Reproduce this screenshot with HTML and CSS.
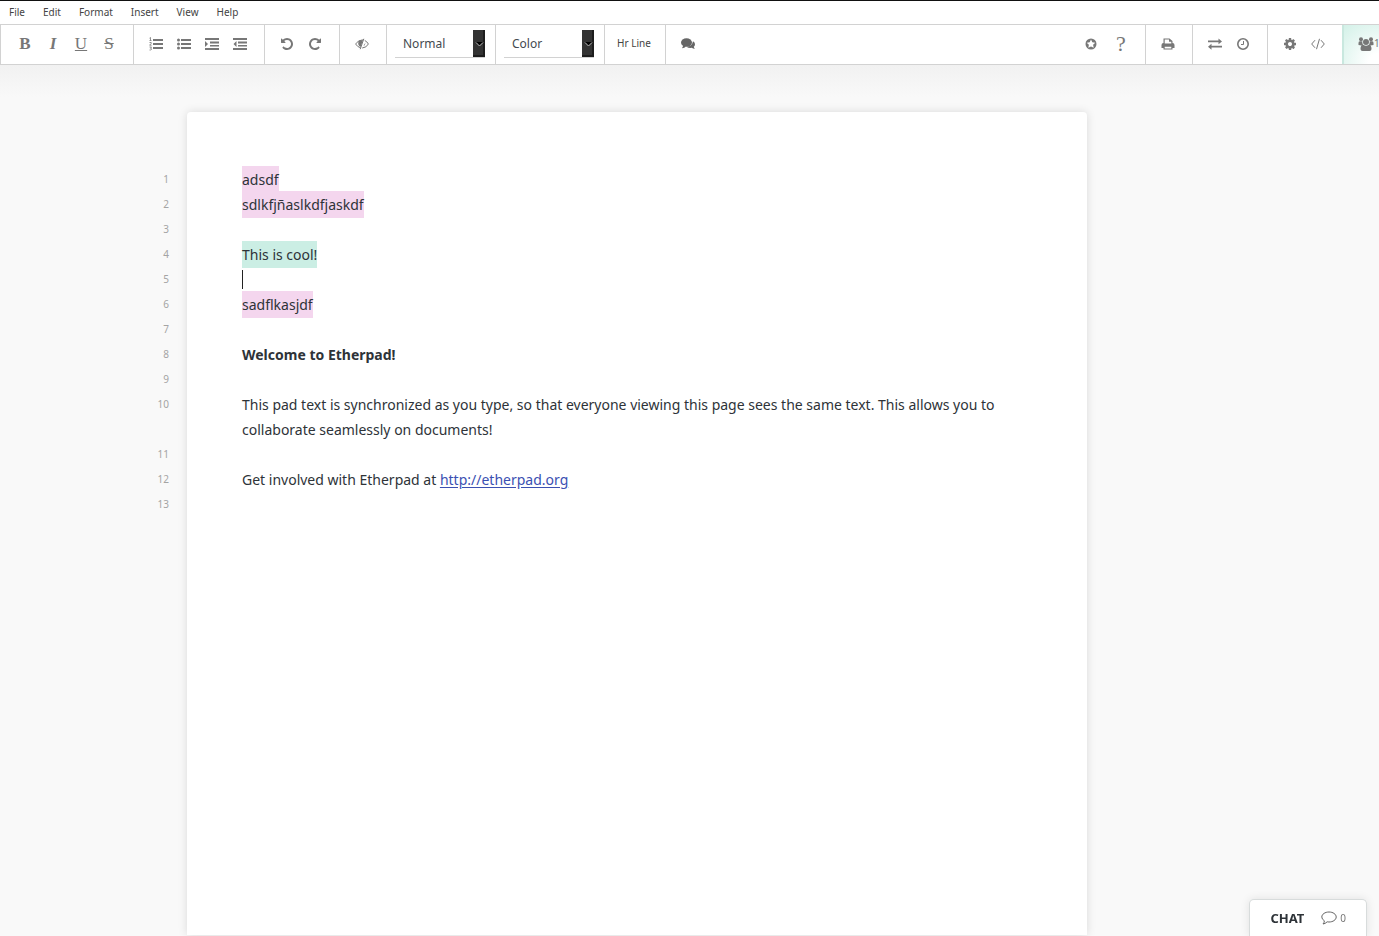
FILE: index.html
```html
<!DOCTYPE html>
<html lang="en">
<head>
<meta charset="utf-8">
<title>Etherpad</title>
<link rel="stylesheet" href="styles.css">
</head>
<body>
<nav class="menubar">
  <button>File</button><button>Edit</button><button>Format</button><button>Insert</button><button>View</button><button>Help</button>
</nav>
<div class="toolbar">
  <div class="group group-first">
    <button class="tool glyph" aria-label="Bold">B</button>
    <button class="tool glyph italic" aria-label="Italic">I</button>
    <button class="tool glyph underline" aria-label="Underline">U</button>
    <button class="tool glyph strike" aria-label="Strikethrough">S</button>
  </div>
  <div class="group">
    <button class="tool" aria-label="Ordered list"><svg width="14" height="14" viewBox="0 0 14 14"><path d="M4 2h10v2H4zM4 6h10v2H4zM4 10h10v2H4z"/><path d="M.5 1.200 1.500.5v3M.5 3.500h2M.5 5.500h1.700v1L.6 8.200h2M.5 10h2L1.500 11.300q1.200 0 1 1-.2 1-2 .7" class="thin"/></svg></button>
    <button class="tool" aria-label="Unordered list"><svg width="14" height="14" viewBox="0 0 14 14"><path d="M4 2h10v2H4zM4 6h10v2H4zM4 10h10v2H4z"/><circle cx="1.500" cy="3" r="1.500"/><circle cx="1.500" cy="7" r="1.500"/><circle cx="1.500" cy="11" r="1.500"/></svg></button>
    <button class="tool" aria-label="Indent"><svg width="14" height="14" viewBox="0 0 14 14"><path d="M0 1h14v2H0zM5 4.500h9v2H5zM5 8h9v1.500H5zM0 11h14v2H0zM0 4l3 3-3 3z"/></svg></button>
    <button class="tool" aria-label="Outdent"><svg width="14" height="14" viewBox="0 0 14 14"><path d="M0 1h14v2H0zM5 4.500h9v2H5zM5 8h9v1.500H5zM0 11h14v2H0zM3.500 4l-3 3 3 3z"/></svg></button>
  </div>
  <div class="group">
    <button class="tool" aria-label="Undo"><svg width="12" height="12" viewBox="0 128 1536 1536"><path id="undo" d="M1536 896q0 156-61 298t-164 245-245 164-298 61q-172 0-327-72.500t-264-204.500q-7-10-6.500-22.500t8.500-20.500l137-138q10-9 25-9 16 2 23 12 73 95 179 147t225 52q104 0 198.500-40.500t163.500-109.500 109.500-163.500 40.500-198.500-40.500-198.500-109.500-163.500-163.500-109.500-198.500-40.500q-98 0-188 35.500t-160 101.500l137 138q31 30 14 69-17 40-59 40h-448q-26 0-45-19t-19-45v-448q0-42 40-59 39-17 69 14l130 129q107-101 244.500-156.500t284.500-55.500q156 0 298 61t245 164 164 245 61 298z"/></svg></button>
    <button class="tool" aria-label="Redo"><svg width="12" height="12" viewBox="0 128 1536 1536"><use href="#undo" transform="matrix(-1 0 0 1 1536 0)"/></svg></button>
  </div>
  <div class="group">
    <button class="tool" aria-label="Clear authorship colors"><svg width="14" height="12" viewBox="0 0 14 12"><path d="M8.800.8 5.200 11.200M5.500 9.800Q2.500 9 .6 6 3.300 2 7 2h1M9.800 2.500Q12 3.500 13.400 6 11.300 9.800 7.200 10" class="line"/><path d="M3.500 3Q2.700 6 4 7.800L5.600 9 8 2.300Q5 1.800 3.500 3zM10.500 4.500Q10.500 7 8.300 8.200z"/></svg></button>
  </div>
  <div class="group">
    <div class="picker">
      <select aria-label="Heading style"><option>Normal</option></select>
      <svg class="arrow" width="12" height="27" viewBox="0 0 12 27"><path d="M0 0h12v27H0z" fill="#1d1d1d"/><path d="M0 0h10v25H0z" fill="#333"/><path d="M3 12h7l-3.500 4z" fill="#000"/><path d="m3 12.500 3.500 3.500L10 12.500" fill="none" stroke="#bbb"/></svg>
    </div>
  </div>
  <div class="group">
    <div class="picker">
      <select aria-label="Text color"><option>Color</option></select>
      <svg class="arrow" width="12" height="27" viewBox="0 0 12 27"><path d="M0 0h12v27H0z" fill="#1d1d1d"/><path d="M0 0h10v25H0z" fill="#333"/><path d="M3 12h7l-3.500 4z" fill="#000"/><path d="m3 12.500 3.500 3.500L10 12.500" fill="none" stroke="#bbb"/></svg>
    </div>
  </div>
  <div class="group">
    <button class="tool wide">Hr Line</button>
  </div>
  <div class="group group-last">
    <button class="tool dark" aria-label="Comments"><svg width="14" height="12" viewBox="0 0 14 12"><ellipse cx="5.500" cy="4.500" rx="5.500" ry="4.300"/><path d="M2.300 7.500 1 10.200Q3.500 10 5 8.500zM12 3.300q2 1.200 2 3 0 1.500-1.200 2.500.2 1.200 1 1.900-1.600.2-3-.9-3 .6-5.300-1.100 5.600-.3 6.500-5.400z"/></svg></button>
  </div>
  <div class="group right spaced">
    <button class="tool" aria-label="Embed star"><svg width="12" height="12" viewBox="0 0 12 12"><path fill-rule="evenodd" d="M6 .5a5.500 5.500 0 1 0 0 11 5.500 5.500 0 0 0 0-11zM6 1.500 7.300 4.300 10.300 4.700 8.100 6.800 8.700 9.800 6 8.400 3.300 9.800 3.900 6.800 1.700 4.700 4.700 4.300z"/></svg></button>
    <button class="tool question" aria-label="Help">?</button>
  </div>
  <div class="group">
    <button class="tool" aria-label="Print"><svg width="14" height="12" viewBox="0 0 14 12"><path fill-rule="evenodd" d="M2.500 5V.5h6L11.500 3v2q2 0 2 2v3h-2v1.500h-9V10h-2V7q0-2 2-2zM3.700 1.600v4h6.600V3.700H8V1.600zM3.700 8.700v1.700h6.600V8.700z"/></svg></button>
  </div>
  <div class="group">
    <button class="tool" aria-label="Import/Export"><svg width="14" height="12" viewBox="0 0 14 12"><path d="M0 2.500h10.500V.5L14 3.500 10.500 6.300v-2H0zM14 7.700H3.500V5.800L0 8.700l3.500 3V9.500H14z"/></svg></button>
    <button class="tool" aria-label="Timeslider"><svg width="12" height="12" viewBox="0 0 12 12"><circle cx="6" cy="6" r="5.200" class="heavy"/><path d="M6.500 3v3.500H4" class="line"/></svg></button>
  </div>
  <div class="group">
    <button class="tool" aria-label="Settings"><svg width="12" height="12" viewBox="128 128 1536 1536"><path d="M1152 896q0-106-75-181t-181-75-181 75-75 181 75 181 181 75 181-75 75-181zm512-109v222q0 12-8 23t-20 13l-185 28q-19 54-39 91 35 50 107 138 10 12 10 25t-9 23q-27 37-99 108t-94 71q-12 0-26-9l-138-108q-44 23-91 38-16 136-29 186-7 28-36 28h-222q-14 0-24.500-8.500t-11.500-21.500l-28-184q-49-16-90-37l-141 107q-10 9-25 9-14 0-25-11-126-114-165-168-7-10-7-23 0-12 8-23 15-21 51-66.500t54-70.500q-27-50-41-99l-183-27q-13-2-21-12.500t-8-23.500v-222q0-12 8-23t19-13l186-28q14-46 39-92-40-57-107-138-10-12-10-24 0-10 9-23 26-36 98.500-107.500t94.500-71.500q13 0 26 10l138 107q44-23 91-38 16-136 29-186 7-28 36-28h222q14 0 24.500 8.500t11.500 21.500l28 184q49 16 90 37l142-107q9-9 24-9 13 0 25 10 129 119 165 170 7 8 7 22 0 12-8 23-15 21-51 66.500t-54 70.500q26 50 41 98l183 28q13 2 21 12.500t8 23.500z"/></svg></button>
    <button class="tool" aria-label="Share"><svg width="14" height="12" viewBox="0 0 14 12"><path d="M4 2.200.7 6 4 9.800M10 2.200 13.300 6 10 9.800M8.500.8l-3 10.400" class="line"/></svg></button>
  </div>
  <button class="users" aria-label="Users"><svg width="16" height="14" viewBox="0 0 16 14"><circle cx="3" cy="2.200" r="2"/><circle cx="13" cy="2.200" r="2"/><circle cx="8" cy="5" r="3"/><path d="M.5 8V6q0-1.700 1.300-1.700h2.500Q4 6 5 7.700L3.600 8.500zM15.500 8V6q0-1.700-1.300-1.700h-2.500Q12 6 11 7.700l1.400.8zM2.500 12q0-4 2.700-4.300Q8 9.700 10.800 7.700q2.700.3 2.700 4.300 0 2-2 2h-7q-2 0-2-2z"/></svg>1</button>
</div>
<main class="workspace">
  <article class="page">
    <div class="row"><span class="num">1</span><div class="text"><span class="pink">adsdf</span></div></div>
    <div class="row"><span class="num">2</span><div class="text"><span class="pink">sdlkfjñaslkdfjaskdf</span></div></div>
    <div class="row"><span class="num">3</span></div>
    <div class="row"><span class="num">4</span><div class="text"><span class="mint">This is cool!</span></div></div>
    <div class="row"><span class="num">5</span><span class="caret"></span></div>
    <div class="row"><span class="num">6</span><div class="text"><span class="pink">sadflkasjdf</span></div></div>
    <div class="row"><span class="num">7</span></div>
    <div class="row"><span class="num">8</span><div class="text"><b>Welcome to Etherpad!</b></div></div>
    <div class="row"><span class="num">9</span></div>
    <div class="row"><span class="num">10</span><div class="text">This pad text is synchronized as you type, so that everyone viewing this page sees the same text. This allows you to collaborate seamlessly on documents!</div></div>
    <div class="row"><span class="num">11</span></div>
    <div class="row"><span class="num">12</span><div class="text">Get involved with Etherpad at <a href="http://etherpad.org">http://etherpad.org</a></div></div>
    <div class="row"><span class="num">13</span></div>
  </article>
</main>
<button class="chat"><b>CHAT</b><svg width="16" height="14" viewBox="0 0 16 14"><path d="M8 1c4 0 7.200 2.200 7.200 5S12 11 8 11q-1 0-1.800-.2Q4.200 12.800 2 13q1.200-1.200 1.400-3.200Q.8 8.300.8 6C.8 3.200 4 1 8 1z" class="line"/></svg><span>0</span></button>
</body>
</html>
```
FILE: styles.css
```css
* { box-sizing: border-box; }
body {
  margin: 0;
  min-height: 100vh;
  display: flex;
  flex-direction: column;
  background: #f9f9f9;
  color: #2e3338;
  font-family: "Noto Sans", sans-serif;
  font-size: 14px;
  line-height: 25px;
}
button, select {
  margin: 0;
  padding: 0;
  border: 0;
  background: none;
  color: inherit;
  font: inherit;
}
svg { fill: currentColor; flex: none; }
.line, .thin, .heavy { fill: none; stroke: currentColor; }
.thin { stroke-width: 0.8; }
.heavy { stroke-width: 1.6; }

.menubar {
  display: flex;
  gap: 18px;
  height: 24px;
  padding-left: 9px;
  border-top: 1px solid #111;
  background: #fff;
  color: #444;
  font-size: 10px;
  line-height: 23px;
}
.toolbar {
  display: flex;
  height: 41px;
  border: 1px solid #d2d2d2;
  border-right: 0;
  background: #fff;
  color: #777;
  overflow: hidden;
}
.group {
  display: flex;
  align-items: center;
  padding: 0 10px 2px 8px;
  border-right: 1px solid #d2d2d2;
}
.group-first { padding-left: 10px; }
.group-last { border-right: 0; }
.right { margin-left: auto; }
.spaced { gap: 2px; }
.tool {
  display: flex;
  align-items: center;
  justify-content: center;
  width: 28px;
  height: 28px;
}
.dark { color: #666; }
.glyph { font: bold 17px "Liberation Serif", serif; }
.italic { font-style: italic; }
.underline { font-weight: normal; text-decoration: underline; }
.strike { font-weight: normal; text-decoration: line-through; }
.question { font: 22px "Liberation Serif", serif; }
.wide { width: 42px; color: #444; font-size: 10px; white-space: nowrap; }
.picker { position: relative; width: 90px; }
.picker select {
  display: block;
  width: 100%;
  height: 28px;
  padding-left: 8px;
  border-bottom: 1px solid #d2d2d2;
  border-radius: 0;
  appearance: none;
  color: #444a50;
  font-size: 12px;
}
.arrow { position: absolute; top: 0; right: 0; pointer-events: none; }
.users {
  display: flex;
  align-items: center;
  width: 37px;
  flex: none;
  padding: 0 0 2px 14px;
  margin-left: -1px;
  border-left: 2px solid #c9e8df;
  background: radial-gradient(circle at 100% 100%, #fff 20%, #d3f1e8 100%);
  font-size: 10px;
}

.workspace {
  flex: 1;
  display: flex;
  justify-content: center;
  padding: 47px 105px 1px 0;
  background: linear-gradient(#f1f1f1, #f9f9f9 32px);
}
.page {
  width: 100%;
  max-width: 900px;
  padding: 55px;
  border-radius: 4px 4px 0 0;
  background: #fff;
  box-shadow: 0 0 10px rgba(0, 0, 0, 0.13);
}
.row { display: flex; align-items: flex-start; min-height: 25px; }
.num {
  flex: none;
  width: 40px;
  margin: 0 73px 0 -113px;
  color: #a4a4a4;
  font-size: 10px;
  line-height: 24px;
  text-align: right;
}
.pink, .mint { padding: 4px 0; }
.pink { background: #f4d6ee; }
.mint { background: #cbeee4; }
.caret { align-self: center; width: 1px; height: 19px; background: #222; }
.text a { color: #3b50b2; text-underline-offset: 2px; }

.chat {
  position: fixed;
  right: 12px;
  bottom: 0;
  display: flex;
  align-items: center;
  height: 37px;
  padding: 0 20px;
  border: 1px solid #d8dcdc;
  border-bottom: 0;
  border-radius: 5px 5px 0 0;
  background: #fff;
  box-shadow: 0 0 10px rgba(0, 0, 0, 0.1);
  font-size: 13px;
}
.chat svg { margin: 0 3px 0 17px; color: #666; }
.chat span { color: #777; font-size: 10px; }
```
